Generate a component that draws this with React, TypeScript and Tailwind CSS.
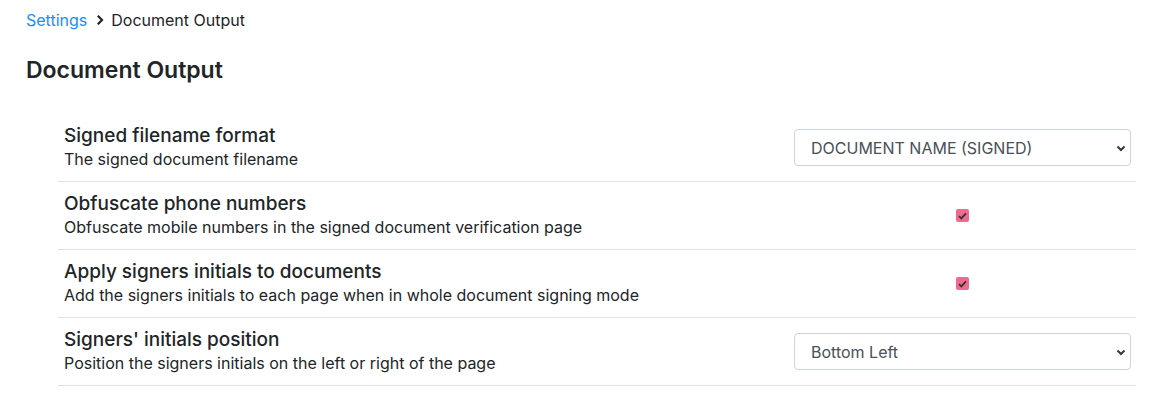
import React from "react";

function Chevron() {
  return (
    <svg width="8" height="12" viewBox="0 0 8 12" className="ml-[9px] mr-[7px]">
      <path d="M1.8 1.8 L6 6 L1.8 10.2" fill="none" stroke="#212529" strokeWidth="2.2" />
    </svg>
  );
}

function Select({ value }: { value: string }) {
  return (
    <div className="relative w-[337px] h-[37px] border border-[#ced4da] rounded-[4px] bg-white flex items-center pl-[16px] text-[16px] text-[#495057]">
      <span>{value}</span>
      <svg className="absolute right-[4px] top-[15px]" width="10" height="7" viewBox="0 0 10 7">
        <path d="M1.5 1.5 L5 5 L8.5 1.5" fill="none" stroke="#343a40" strokeWidth="2" />
      </svg>
    </div>
  );
}

function Check() {
  return (
    <div className="w-[13px] h-[13px] rounded-[2px] bg-[#f06a8e] flex items-center justify-center">
      <svg width="9" height="8" viewBox="0 0 9 8">
        <path d="M1 4.2 L3.3 6.4 L8 1.3" fill="none" stroke="#333" strokeWidth="1.8" />
      </svg>
    </div>
  );
}

function Row({ title, desc, control }: { title: string; desc: string; control: React.ReactNode }) {
  return (
    <div className="flex items-center border-b border-[#dee2e6] pl-[6px] pr-[5px] py-[10px]">
      <div className="flex-1">
        <div className="text-[19px] leading-[24px] text-[#212529] font-medium">{title}</div>
        <div className="text-[16px] leading-[23px] text-[#212529]">{desc}</div>
      </div>
      <div className="w-[337px] flex justify-center">{control}</div>
    </div>
  );
}

export default function App() {
  return (
    <div className="w-[1165px] h-[404px] bg-white" style={{ fontFamily: "Inter, 'Noto Sans', sans-serif" }}>
      <div className="pl-[26px] pt-[9px] flex items-center text-[16px] leading-[22px]">
        <span className="text-[#1a8cff]">Settings</span>
        <Chevron />
        <span className="text-[#212529]">Document Output</span>
      </div>
      <h1 className="pl-[26px] mt-[25px] text-[23px] leading-[28px] font-semibold text-[#212529]">Document Output</h1>
      <div className="ml-[58px] w-[1078px] mt-[30px]">
        <Row title="Signed filename format" desc="The signed document filename" control={<Select value="DOCUMENT NAME (SIGNED)" />} />
        <Row title="Obfuscate phone numbers" desc="Obfuscate mobile numbers in the signed document verification page" control={<Check />} />
        <Row title="Apply signers initials to documents" desc="Add the signers initials to each page when in whole document signing mode" control={<Check />} />
        <Row title="Signers' initials position" desc="Position the signers initials on the left or right of the page" control={<Select value="Bottom Left" />} />
      </div>
    </div>
  );
}
